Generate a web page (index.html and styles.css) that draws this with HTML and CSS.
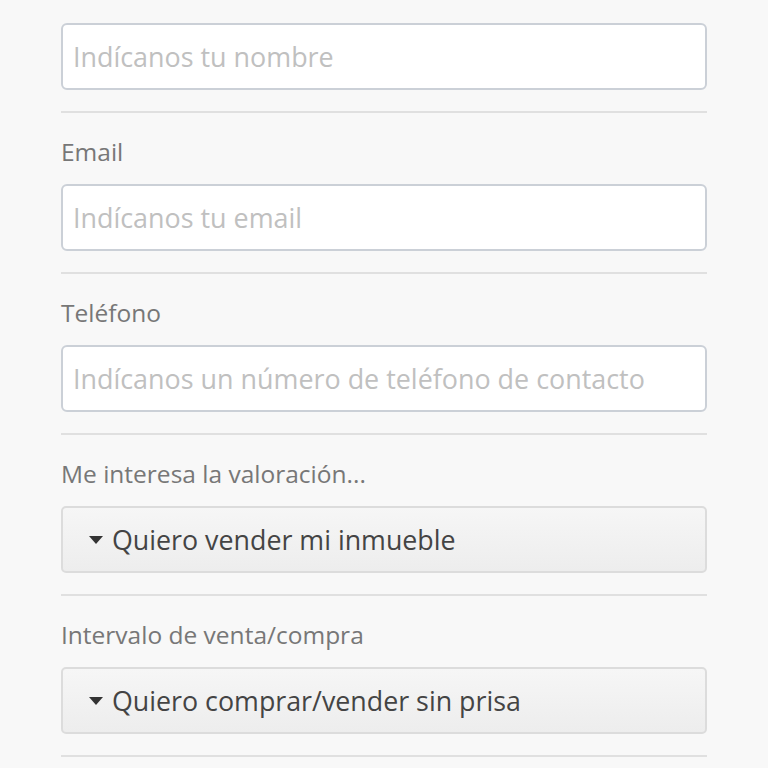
FILE: index.html
```html
<!DOCTYPE html>
<html lang="es">
<head>
<meta charset="utf-8">
<link rel="stylesheet" href="styles.css">
</head>
<body>
<form class="form">
  <div class="field">
    <label class="label">Nombre</label>
    <div class="input placeholder">Indícanos tu nombre</div>
  </div>
  <div class="field">
    <label class="label">Email</label>
    <div class="input placeholder">Indícanos tu email</div>
  </div>
  <div class="field">
    <label class="label">Teléfono</label>
    <div class="input placeholder">Indícanos un número de teléfono de contacto</div>
  </div>
  <div class="field">
    <label class="label">Me interesa la valoración...</label>
    <div class="select"><span class="caret"></span>Quiero vender mi inmueble</div>
  </div>
  <div class="field">
    <label class="label">Intervalo de venta/compra</label>
    <div class="select"><span class="caret"></span>Quiero comprar/vender sin prisa</div>
  </div>
</form>
</body>
</html>
```
FILE: styles.css
```css
html, body {
  margin: 0;
  padding: 0;
  background: #f8f8f8;
  height: 100%;
  overflow: hidden;
}
body {
  font-family: "Open Sans", "Lato", sans-serif;
}
.form {
  margin: -48px 61px 0 61px;
  display: flex;
  flex-direction: column;
}
.field {
  display: flex;
  flex-direction: column;
  padding: 24px 0 21px;
  border-bottom: 2px solid #e0e0e0;
}
.label {
  display: block;
  height: 30px;
  line-height: 30px;
  font-size: 24.5px;
  color: #777;
  margin-bottom: 17px;
}
.input {
  box-sizing: border-box;
  height: 67px;
  border: 2px solid #cbd0d7;
  border-radius: 6px;
  background: #fff;
  display: flex;
  align-items: center;
  padding: 0 10px;
  font-size: 26.9px;
}
.placeholder {
  color: #c0c0c0;
}
.select {
  box-sizing: border-box;
  height: 67px;
  border: 2px solid #dcdcdc;
  border-radius: 5px;
  background: linear-gradient(#f6f6f6, #ededed);
  display: flex;
  align-items: center;
  padding: 0 26px 0 26px;
  font-size: 26.8px;
  color: #444;
}
.caret {
  width: 0;
  height: 0;
  border-left: 7.5px solid transparent;
  border-right: 7.5px solid transparent;
  border-top: 8px solid #333;
  margin-right: 9px;
}
```
